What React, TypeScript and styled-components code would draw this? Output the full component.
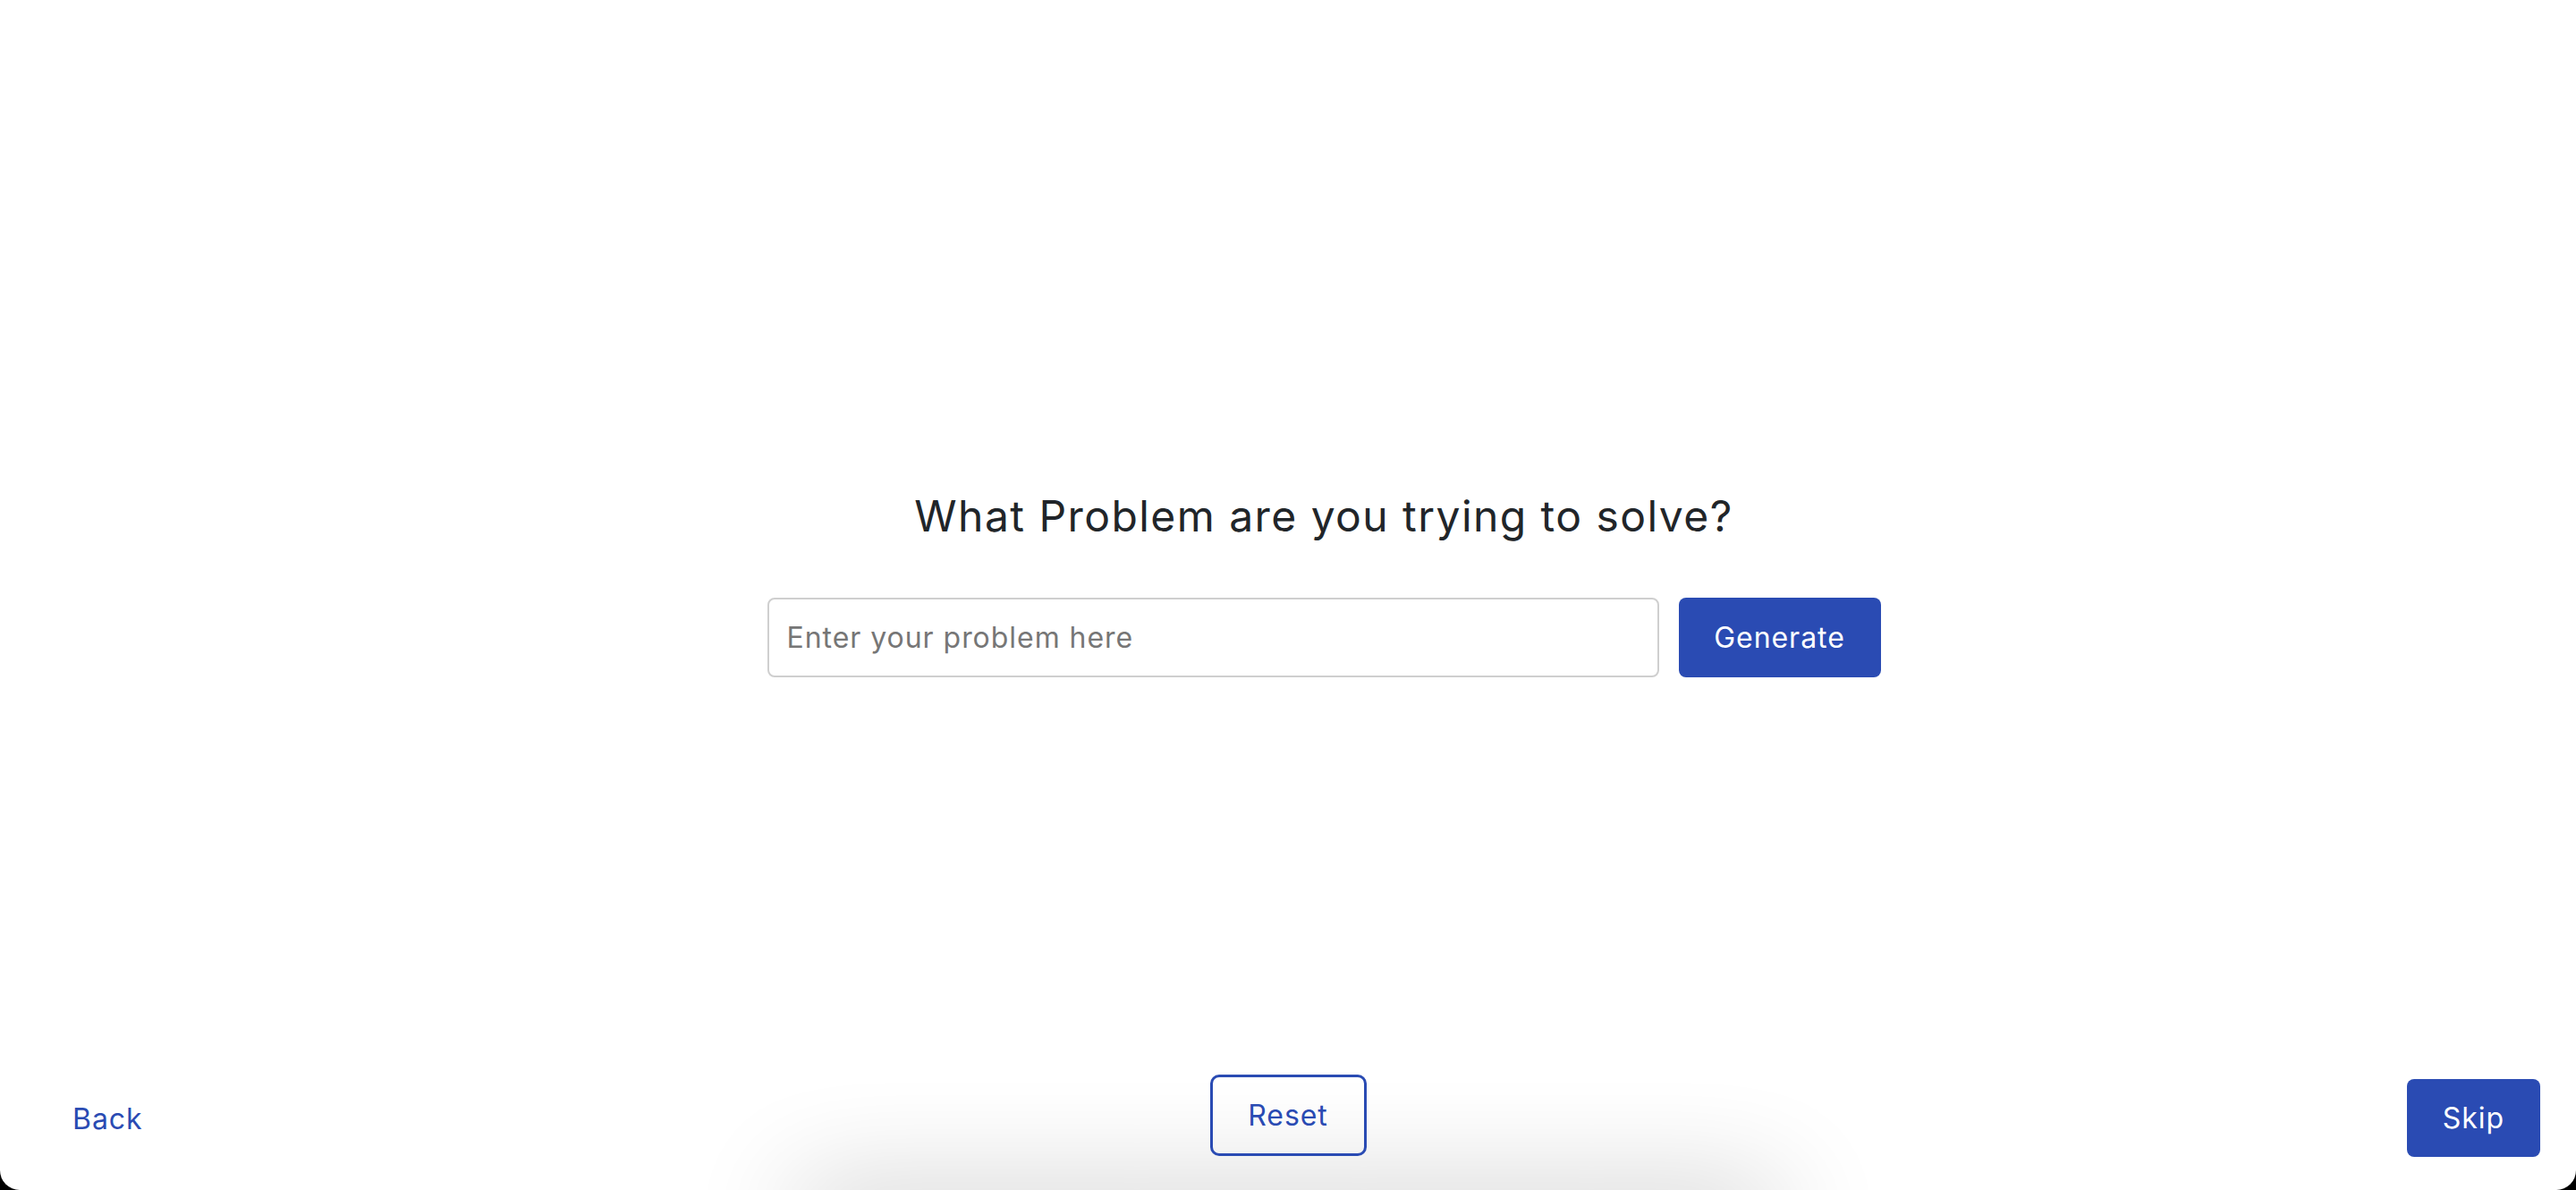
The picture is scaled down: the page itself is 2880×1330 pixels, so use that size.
import styled, { createGlobalStyle } from 'styled-components';

const BLUE = '#2a4bb3';

const GlobalStyle = createGlobalStyle`
  html, body {
    margin: 0;
    padding: 0;
    background: #000;
  }
  * {
    box-sizing: border-box;
  }
`;

const App = () => {
  return (
    <>
      <GlobalStyle />
      <Page>
        <Main>
          <Title>What Problem are you trying to solve?</Title>
          <PromptRow>
            <ProblemInput type="text" placeholder="Enter your problem here" />
            <SolidButton $w={226} $h={89}>Generate</SolidButton>
          </PromptRow>
        </Main>
        <Footer>
          <LinkButton>Back</LinkButton>
          <OutlineButton>Reset</OutlineButton>
          <SolidButton $w={149} $h={87}>Skip</SolidButton>
        </Footer>
      </Page>
    </>
  );
};

const Page = styled.div`
  display: flex;
  flex-direction: column;
  height: 100vh;
  background: #fff;
  border-radius: 0 0 22px 22px;
  overflow: hidden;
  font-family: 'Inter', 'Open Sans', sans-serif;
`;

const Main = styled.main`
  flex: 1;
  display: flex;
  flex-direction: column;
  align-items: center;
  padding: 548px 0 0 80px;
  gap: 62px;
`;

const Title = styled.h1`
  margin: 0;
  font-size: 48px;
  line-height: 58px;
  font-weight: 400;
  letter-spacing: 0.03em;
  color: #212529;
`;

const PromptRow = styled.div`
  display: flex;
  align-items: center;
  gap: 22px;
`;

const ProblemInput = styled.input`
  width: 997px;
  height: 89px;
  padding: 0 20px;
  border: 2px solid #cfcfcf;
  border-radius: 8px;
  font-family: inherit;
  font-size: 32px;
  letter-spacing: 0.03em;
  color: #212529;
  outline: none;

  &::placeholder {
    color: #767676;
  }
`;

const SolidButton = styled.button<{ $w: number; $h: number }>`
  width: ${(p) => p.$w}px;
  height: ${(p) => p.$h}px;
  border: none;
  border-radius: 8px;
  background: ${BLUE};
  color: #fff;
  font-family: inherit;
  font-size: 32px;
  letter-spacing: 0.03em;
  cursor: pointer;
`;

const Footer = styled.footer`
  position: relative;
  isolation: isolate;
  display: grid;
  grid-template-columns: 1fr auto 1fr;
  align-items: end;
  padding: 0 40px 37px;

  /* soft shadow rising from below the window edge */
  &::before {
    content: '';
    position: absolute;
    z-index: -1;
    left: 50%;
    top: 100%;
    width: 1110px;
    height: 60px;
    transform: translateX(-50%);
    border-radius: 30px;
    box-shadow: 0 0 120px rgba(0, 0, 0, 0.24);
  }

  & > :last-child {
    justify-self: end;
  }
`;

const LinkButton = styled.button`
  justify-self: start;
  align-self: center;
  padding: 0 0 0 41px;
  margin-top: 6px;
  border: none;
  background: none;
  color: ${BLUE};
  font-family: inherit;
  font-size: 32px;
  letter-spacing: 0.03em;
  cursor: pointer;
`;

const OutlineButton = styled.button`
  width: 175px;
  height: 91px;
  margin-bottom: 1px;
  border: 3px solid ${BLUE};
  border-radius: 10px;
  background: transparent;
  color: ${BLUE};
  font-family: inherit;
  font-size: 32px;
  letter-spacing: 0.03em;
  cursor: pointer;
`;

export default App;
